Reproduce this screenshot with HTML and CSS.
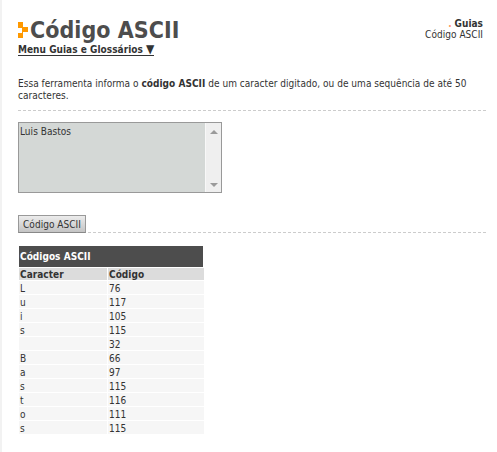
FILE: index.html
```html
<!DOCTYPE html>
<html lang="pt-BR">

<head>
    <meta charset="UTF-8">
    <title>Código ASCII</title>
    <link rel="stylesheet" href="styles.css">
</head>

<body>
    <div class="page">
        <div class="top">
            <div class="top-left">
                <h1 class="title">
                    <svg class="title-icon" width="10" height="16" viewBox="0 0 10 16">
                        <path fill="#ff9900" d="M0 0h5v5h5v5H5v6H0v-5h4V6H0z" />
                    </svg>
                    Código ASCII
                </h1>
                <a class="menu-link" href="#">Menu Guias e Glossários <span class="arrow">▼</span></a>
            </div>
            <div class="crumbs">
                <div><span class="dot">.</span> <b>Guias</b></div>
                <div>Código ASCII</div>
            </div>
        </div>

        <p class="intro">Essa ferramenta informa o <b>código ASCII</b> de um caracter digitado, ou de uma sequência de até 50 caracteres.</p>

        <div class="input-box">
            <textarea class="input-text">Luis Bastos</textarea>
            <div class="scroll">
                <svg width="8" height="4" viewBox="0 0 8 4"><path fill="#9a9a9a" d="M4 0l4 4H0z" /></svg>
                <svg width="8" height="4" viewBox="0 0 8 4"><path fill="#9a9a9a" d="M0 0h8L4 4z" /></svg>
            </div>
        </div>

        <div class="submit-row">
            <button class="submit">Código ASCII</button>
        </div>

        <table class="codes">
            <tr class="head"><th colspan="2">Códigos ASCII</th></tr>
            <tr class="cols"><th>Caracter</th><th>Código</th></tr>
            <tr><td>L</td><td>76</td></tr>
            <tr><td>u</td><td>117</td></tr>
            <tr><td>i</td><td>105</td></tr>
            <tr><td>s</td><td>115</td></tr>
            <tr><td>&nbsp;</td><td>32</td></tr>
            <tr><td>B</td><td>66</td></tr>
            <tr><td>a</td><td>97</td></tr>
            <tr><td>s</td><td>115</td></tr>
            <tr><td>t</td><td>116</td></tr>
            <tr><td>o</td><td>111</td></tr>
            <tr><td>s</td><td>115</td></tr>
        </table>
    </div>
</body>

</html>
```

FILE: styles.css
```css
html, body {
    margin: 0;
    height: 100%;
}

body {
    font-family: 'DejaVu Sans', sans-serif;
    font-stretch: condensed;
    font-size: 10px;
    letter-spacing: 0.03px;
    color: #333;
    background: white;
    overflow: hidden;
}

.page {
    min-height: 452px;
    box-sizing: border-box;
    border-left: 2px solid #f2f2f2;
    padding: 17px 11px 0 16px;
}

.top {
    display: flex;
    justify-content: space-between;
}

.title {
    margin: 0;
    display: flex;
    align-items: center;
    gap: 2px;
    font-size: 23px;
    line-height: 26px;
    color: #4d4d4d;
}

.menu-link {
    display: inline-block;
    margin-top: 1px;
    font-weight: bold;
    line-height: 10px;
    color: #333;
    text-decoration: none;
    border-bottom: 1px solid #333;
}

.arrow {
    font-size: 12px;
    line-height: 10px;
}

.crumbs {
    margin: 1px 3px 0 0;
    text-align: right;
    line-height: 11px;
}

.dot {
    color: #ff9966;
    font-weight: bold;
}

.intro {
    margin: 22px 0 0;
    line-height: 12px;
    padding-bottom: 8px;
    border-bottom: 1px dashed #ccc;
}

.input-box {
    display: flex;
    width: 204px;
    height: 71px;
    box-sizing: border-box;
    margin-top: 11px;
    border: 1px solid #999;
}

.input-text {
    flex: 1;
    margin: 0;
    padding: 3px 1px;
    border: none;
    outline: none;
    resize: none;
    overflow: hidden;
    font: inherit;
    letter-spacing: inherit;
    color: #333;
    background: #d4d8d6;
}

.scroll {
    width: 16px;
    border-left: 1px solid #f8f8f8;
    background: #efefef;
    display: flex;
    flex-direction: column;
    justify-content: space-between;
    align-items: center;
    padding: 7px 0 5px;
    box-sizing: border-box;
}

.submit-row {
    margin-top: 22px;
    border-bottom: 1px dashed #ccc;
}

.submit {
    display: block;
    height: 18px;
    width: 68px;
    padding: 0;
    margin-bottom: -1px;
    font: inherit;
    letter-spacing: inherit;
    color: #333;
    background: linear-gradient(#ececec, #c4c4c4);
    border: 1px solid #999;
    border-bottom-color: #888;
}

.codes {
    margin: 13px 0 0 1px;
    width: 185px;
    border-collapse: separate;
    border-spacing: 0;
}

.codes th, .codes td {
    padding: 1px 1px 0;
    text-align: left;
    line-height: 12px;
    border-bottom: 1px solid white;
}

.codes td {
    padding-top: 2px;
    height: 11px;
    line-height: 11px;
    background: #f6f6f6;
}

.codes th:first-child, .codes td:first-child {
    width: 86px;
    border-right: 1px solid white;
}

.head th {
    background: #4d4d4d;
    color: white;
    height: 20px;
}

.cols th {
    background: #dcdcdc;
    line-height: 11px;
}
```
